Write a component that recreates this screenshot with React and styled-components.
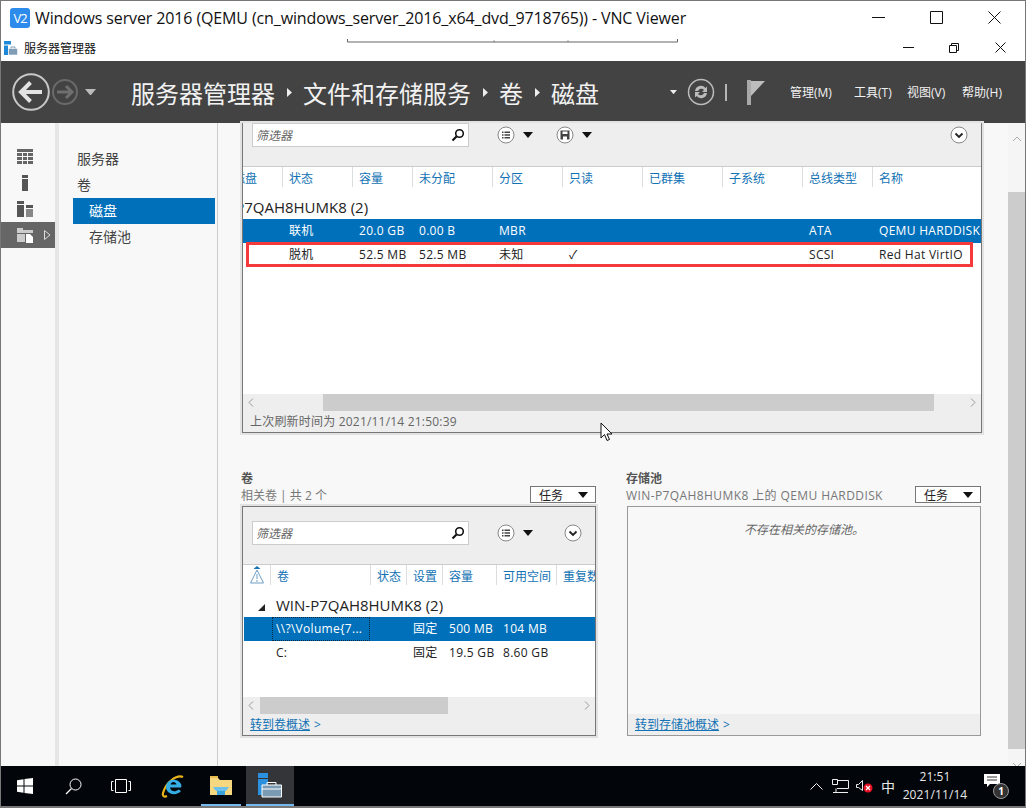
import React from 'react'
import styled, { createGlobalStyle } from 'styled-components'

const FONT = `"Open Sans", "Noto Sans CJK SC", sans-serif`
const BLUE = '#0070bb'
const LINK = '#1272b4'

const Global = createGlobalStyle`
  html, body { margin: 0; padding: 0; background: #fff; }
  body { font-family: ${FONT}; font-size: 12px; }
  * { box-sizing: border-box; }
`

const Caret = ({ size = 10, color = '#111' }) => (
  <svg width={size} height={size * 0.6} viewBox="0 0 10 6"><path d="M0 0h10L5 6z" fill={color} /></svg>
)

const RoundIcon = ({ kind }) => (
  <svg width="18" height="18" viewBox="0 0 18 18">
    <circle cx="9" cy="9" r="8" fill="#fff" stroke="#888" />
    {kind === 'list' && (
      <path d="M5 5.500h1.500v1.500H5zM5 8.300h1.500v1.500H5zM5 11h1.500v1.500H5zM7.500 5.500H13v1.500H7.500zM7.500 8.300H13v1.500H7.500zM7.500 11H13v1.500H7.500z" fill="#444" />
    )}
    {kind === 'save' && (
      <path d="M4.500 4.500h9v9h-9zM6.500 5.500v2.500h5V5.500zM7 10.500v3h4v-3z" fill="#444" fillRule="evenodd" />
    )}
    {kind === 'down' && <path d="M5.500 7.500L9 11l3.500-3.500" fill="none" stroke="#222" strokeWidth="1.800" />}
  </svg>
)

const SearchIcon = () => (
  <svg width="14" height="14" viewBox="0 0 14 14">
    <circle cx="8.500" cy="5.500" r="3.800" fill="none" stroke="#111" strokeWidth="1.600" />
    <path d="M5.500 8.500L1.500 12.500" stroke="#111" strokeWidth="2.200" />
  </svg>
)

const Window = styled.div`
  width: 1026px;
  height: 808px;
  border: 1px solid #777;
  border-bottom-width: 2px;
  display: flex;
  flex-direction: column;
  overflow: hidden;
  position: relative;
  background: #fff;
`

const TitleBar = styled.div`
  height: 33px;
  flex: none;
  display: flex;
  align-items: center;
  padding: 0 2px 0 9px;
  font-size: 16px;
  color: #111;
  white-space: nowrap;
`

const TitleText = styled.span`
  margin-left: 5px;
  letter-spacing: -0.12px;
  flex: 1;
`

const LogoBox = styled.div`
  width: 20px;
  height: 20px;
  border-radius: 3px;
  background: #2d8ceb;
  color: #fff;
  font-size: 13px;
  line-height: 20px;
  text-align: center;
  letter-spacing: -1px;
  flex: none;
`

const WinButton = styled.div`
  width: ${p => p.$w}px;
  height: 100%;
  display: flex;
  align-items: center;
  justify-content: center;
  flex: none;
`

const InnerBar = styled.div`
  height: 27px;
  flex: none;
  display: flex;
  align-items: center;
  padding: 0 2px 0 3px;
  font-size: 12px;
  color: #111;
`

const InnerTitle = styled.span`
  margin-left: 6px;
  flex: 1;
`

const ToolbarRemnant = styled.svg`
  position: absolute;
  left: 346px;
  top: 36px;
`

const Header = styled.header`
  height: 62px;
  flex: none;
  background: #434343;
  color: #f2f2f2;
  display: flex;
  align-items: center;
  padding-left: 11px;
`

const NavArrows = styled.div`
  width: 119px;
  display: flex;
  align-items: center;
  gap: 2px;
`

const NavCaret = styled.span`
  margin-left: 5px;
  display: flex;
`

const Crumbs = styled.div`
  display: flex;
  align-items: center;
  font-size: 24px;
  width: 530px;
  letter-spacing: 0;
`

const CrumbArrow = styled.span`
  width: 28px;
  display: flex;
  justify-content: center;
`

const HeaderTools = styled.div`
  display: flex;
  align-items: center;
  margin-left: 9px;
`

const RefreshIcon = styled.svg`
  margin-left: 10px;
`

const Pipe = styled.div`
  width: 2px;
  height: 17px;
  background: #b5b5b5;
  margin: 0 20px 0 10px;
`

const Menu = styled.nav`
  display: grid;
  grid-template-columns: 64px 53px 55px auto;
  margin-left: 25px;
  font-size: 12px;
  white-space: nowrap;
`

const Body = styled.div`
  flex: 1;
  min-height: 0;
  display: flex;
  background: #f8f8f8;
`

const IconRail = styled.div`
  width: 54px;
  flex: none;
  padding-top: 21px;
`

const RailStrip = styled.div`
  width: 4px;
  flex: none;
  background: #e6e6e6;
`

const RailItem = styled.div`
  height: 26px;
  display: flex;
  align-items: center;
  padding-left: 16px;
  position: relative;
  background: ${p => (p.$active ? '#666' : 'transparent')};
`

const RailMarker = styled.svg`
  position: absolute;
  left: 43px;
  top: 8px;
`

const SideNav = styled.div`
  width: 159px;
  flex: none;
  border-right: 1px solid #ccc;
  padding: 23px 2px 0 14px;
`

const NavItem = styled.div`
  height: 26px;
  line-height: 26px;
  font-size: 14px;
  color: ${p => (p.$active ? '#fff' : '#444')};
  background: ${p => (p.$active ? BLUE : 'transparent')};
  padding-left: ${p => (p.$sub ? 16 : 4)}px;
`

const Content = styled.main`
  flex: 1;
  min-width: 0;
  padding-left: 24px;
  padding-right: 26px;
  display: flex;
  flex-direction: column;
`

const Panel = styled.section`
  border: 1px solid #777;
  border-top-width: ${p => (p.$cut ? 0 : 1)}px;
  height: ${p => p.$h}px;
  flex: none;
  box-shadow: 0 0 0 2px #e2e2e2;
  display: flex;
  flex-direction: column;
  background: #fff;
  position: relative;
`

const Toolbar = styled.div`
  height: ${p => p.$h}px;
  flex: none;
  background: #eee;
  border-bottom: 1px solid #ccc;
  display: flex;
  align-items: flex-start;
  padding: ${p => p.$top}px 13px 0 9px;
`

const FilterBox = styled.div`
  width: 218px;
  height: 24px;
  background: #fff;
  border: 1px solid #ccc;
  display: flex;
  align-items: center;
  justify-content: space-between;
  padding: 0 3px 0 3px;
  font-style: italic;
  color: #666;
`

const ToolButton = styled.div`
  display: flex;
  align-items: center;
  gap: 8px;
  height: 24px;
  margin-left: ${p => p.$ml}px;
`

const Viewport = styled.div`
  flex: 1;
  min-height: 0;
  overflow: hidden;
`

const Scrolled = styled.div`
  width: 1000px;
  margin-left: ${p => -p.$offset}px;
`

const HeadRow = styled.div`
  display: grid;
  grid-template-columns: ${p => p.$cols};
  height: 25px;
  background: #fff;
  color: ${LINK};
`

const HeadCell = styled.div`
  height: 20px;
  line-height: 23px;
  padding-left: ${p => p.$pad ?? 7}px;
  margin-right: -1px;
  border-right: 1px solid #ddd;
  white-space: nowrap;
  overflow: hidden;
`

const WarnIcon = styled.svg`
  margin-top: 1px;
`

const GroupRow = styled.div`
  height: 27px;
  font-size: 15px;
  color: #222;
  padding: 3px 0 0 ${p => p.$pad}px;
  display: flex;
  align-items: center;
  white-space: nowrap;
`

const GroupArrow = styled.span`
  width: 0;
  height: 0;
  margin: 4px 11px 0 0;
  border-right: 7px solid #222;
  border-top: 7px solid transparent;
`

const Row = styled.div`
  display: grid;
  grid-template-columns: ${p => p.$cols};
  height: 24px;
  line-height: 23px;
  color: ${p => (p.$selected ? '#fff' : '#222')};
  background: ${p => (p.$selected ? BLUE : 'transparent')};
  position: relative;
  margin-left: ${p => p.$ml || 0}px;
`

const Cell = styled.div`
  padding-left: ${p => p.$pad ?? 7}px;
  white-space: nowrap;
  overflow: hidden;
  letter-spacing: 0.3px;
`

const FocusCell = styled(Cell)`
  outline: 1px dotted #0b2a45;
  outline-offset: -1px;
  margin-left: 2px;
  padding-left: 4px;
`

const RedMark = styled.div`
  position: absolute;
  left: 80px;
  top: -1px;
  width: 727px;
  height: 25px;
  border: 3px solid #f43a3a;
`

const HScroll = styled.div`
  height: 17px;
  flex: none;
  background: #eee;
  display: flex;
  align-items: center;
  color: #888;
`

const ScrollEnd = styled.div`
  width: ${p => p.$w}px;
  flex: none;
  padding-left: ${p => p.$pad}px;
  display: flex;
`

const HThumb = styled.div`
  width: ${p => p.$w}px;
  height: 17px;
  flex: none;
  background: #ccc;
`

const Footer = styled.div`
  height: 21px;
  flex: none;
  background: #eee;
  color: #666;
  padding-left: 7px;
  line-height: 21px;
  white-space: nowrap;
  letter-spacing: 0.2px;
`

const FootLink = styled.span`
  color: ${LINK};
  letter-spacing: 0;
`

const FootLabel = styled.span`
  text-decoration: underline;
  margin-right: 4px;
`

const Sections = styled.div`
  display: grid;
  grid-template-columns: 354px 354px;
  column-gap: 31px;
  margin-top: 38px;
`

const SectionHead = styled.div`
  height: 35px;
`

const SectionTitle = styled.div`
  font-weight: 700;
  color: #555;
  line-height: 15px;
  margin-left: -1px;
`

const SectionSub = styled.div`
  display: flex;
  justify-content: space-between;
  align-items: center;
  height: 17px;
  color: #777;
  white-space: nowrap;
  margin-left: -1px;
  letter-spacing: ${p => (p.$spread ? 0.4 : 0)}px;
`

const TaskButton = styled.div`
  width: 66px;
  height: 17px;
  border: 1px solid #777;
  background: #fff;
  color: #222;
  display: flex;
  align-items: center;
  justify-content: space-between;
  padding: 0 7px 0 8px;
  flex: none;
  letter-spacing: 0;
`

const EmptyPanel = styled.section`
  height: 230px;
  border: 1px solid #999;
  background: #f8f8f8;
  display: flex;
  flex-direction: column;
`

const EmptyText = styled.div`
  flex: 1;
  text-align: center;
  padding-top: 13px;
  color: #666;
  font-style: italic;
`

const VScroll = styled.div`
  width: 17px;
  flex: none;
  background: #f5f5f5;
  display: flex;
  flex-direction: column;
  align-items: center;
`

const VArrow = styled.div`
  height: 17px;
  flex: none;
  padding-top: ${p => p.$pad}px;
`

const VThumb = styled.div`
  width: 17px;
  height: 557px;
  margin-top: 52px;
  background: #ccc;
  flex: none;
`

const Taskbar = styled.footer`
  height: 40px;
  flex: none;
  background: #02060b;
  display: flex;
  align-items: center;
  color: #e8e8e8;
`

const TaskSlot = styled.div`
  width: ${p => p.$w || 48}px;
  height: 40px;
  display: flex;
  align-items: center;
  justify-content: center;
  flex: none;
  margin-left: ${p => p.$ml || 0}px;
  background: ${p => (p.$active ? '#333538' : 'transparent')};
  border-bottom: ${p => (p.$open ? '2px solid #76b9ed' : '0')};
`

const TaskSpacer = styled.div`
  flex: 1;
`

const Tray = styled.div`
  width: 24px;
  height: 40px;
  display: flex;
  align-items: center;
  justify-content: center;
  flex: none;
  font-size: 14px;
`

const Clock = styled.div`
  width: 70px;
  flex: none;
  text-align: center;
  line-height: 18px;
  font-size: 12px;
  letter-spacing: 0.1px;
  white-space: nowrap;
`

const Notify = styled.div`
  width: 24px;
  height: 28px;
  margin: 0 17px 0 14px;
  position: relative;
  flex: none;
`

const NotifyGlyph = styled.svg`
  margin-top: 2px;
`

const NotifyBadge = styled.span`
  position: absolute;
  left: 9px;
  top: 11px;
  width: 16px;
  height: 16px;
  border-radius: 50%;
  background: #333;
  border: 1px solid #999;
  color: #fff;
  font-size: 10px;
  font-weight: 700;
  line-height: 14px;
  text-align: center;
`

const Pointer = styled.svg`
  position: absolute;
  left: 598px;
  top: 421px;
`

const TOP_COLS = '116px 70px 60px 80px 70px 80px 80px 80px 70px 294px'
const LOW_COLS = '27px 100px 36px 36px 54px 60px 100px'
const LOW_ROW_COLS = '26px 100px 36px 36px 54px 60px 100px'

const topHeads = ['磁盘', '状态', '容量', '未分配', '分区', '只读', '已群集', '子系统', '总线类型', '名称']
const lowHeads = ['卷', '状态', '设置', '容量', '可用空间', '重复数']

const topRows = [
  { selected: true, cells: ['', '联机', '20.0 GB', '0.00 B', 'MBR', '', '', '', 'ATA', 'QEMU HARDDISK'] },
  { cells: ['', '脱机', '52.5 MB', '52.5 MB', '未知', '✓', '', '', 'SCSI', 'Red Hat VirtIO'] },
]

const railIcons = [
  <svg key="a" width="16" height="16" viewBox="0 0 16 16" fill="#666"><path d="M0 0h16v3H0zM0 4h5v3H0zM6 4h4v3H6zM11 4h5v3h-5zM0 8h5v3H0zM6 8h4v3H6zM11 8h5v3h-5zM0 12h5v3H0zM6 12h4v3H6zM11 12h5v3h-5z" /></svg>,
  <svg key="b" width="16" height="16" viewBox="0 0 16 16" fill="#555"><path d="M5 0h6v3H5zM5 4h6v12H5z" /></svg>,
  <svg key="c" width="16" height="16" viewBox="0 0 16 16"><path d="M0 0h7v3H0zM0 4h7v12H0z" fill="#555" /><path d="M9 4h7v3H9z" fill="#555" /><path d="M9 8h7v8H9z" fill="#888" /></svg>,
]

const CrumbMark = () => (
  <CrumbArrow>
    <svg width="5" height="9" viewBox="0 0 5 9"><path d="M0 0l5 4.500L0 9z" fill="#eee" /></svg>
  </CrumbArrow>
)

const SectionHeader = ({ title, sub, spread }) => (
  <SectionHead>
    <SectionTitle>{title}</SectionTitle>
    <SectionSub $spread={spread}>
      <span>{sub}</span>
      <TaskButton>任务<Caret /></TaskButton>
    </SectionSub>
  </SectionHead>
)

const App = () => {
  return (
    <Window>
      <Global />
      <TitleBar>
        <LogoBox>V2</LogoBox>
        <TitleText>Windows server 2016 (QEMU (cn_windows_server_2016_x64_dvd_9718765)) - VNC Viewer</TitleText>
        <WinButton $w={58}>
          <svg width="13" height="13" viewBox="0 0 13 13"><path d="M0 6.500h13" stroke="#111" /></svg>
        </WinButton>
        <WinButton $w={58}>
          <svg width="13" height="13" viewBox="0 0 13 13"><path d="M.5.500h12v12H.500z" fill="none" stroke="#111" /></svg>
        </WinButton>
        <WinButton $w={58}>
          <svg width="13" height="13" viewBox="0 0 13 13"><path d="M.5.500l12 12M12.500.500l-12 12" stroke="#111" /></svg>
        </WinButton>
      </TitleBar>
      <InnerBar>
        <svg width="14" height="14" viewBox="0 0 14 14">
          <path d="M0 0h7v3.500H0zM0 4.500h4V14H0z" fill="#1e88d8" />
          <path d="M4.500 7.500h9V14h-9z" fill="#7f9db5" stroke="#fff" strokeWidth=".6" />
          <path d="M7 7.500V6h4v1.500" fill="none" stroke="#7f9db5" />
        </svg>
        <InnerTitle>服务器管理器</InnerTitle>
        <WinButton $w={46}>
          <svg width="11" height="11" viewBox="0 0 11 11"><path d="M0 5.500h11" stroke="#111" /></svg>
        </WinButton>
        <WinButton $w={46}>
          <svg width="10" height="10" viewBox="0 0 10 10"><path d="M.5 2.500h7v7h-7zM2.500 2.500v-2h7v7h-2" fill="none" stroke="#111" /></svg>
        </WinButton>
        <WinButton $w={46}>
          <svg width="11" height="11" viewBox="0 0 11 11"><path d="M.5.500l10 10M10.500.500l-10 10" stroke="#111" /></svg>
        </WinButton>
      </InnerBar>
      <ToolbarRemnant width="332" height="6" viewBox="0 0 332 6">
        <path d="M.5 2v3H330.500V2M147 3.500v1.500M221 3.500v1.500" fill="none" stroke="#666" />
      </ToolbarRemnant>

      <Header>
        <NavArrows>
          <svg width="38" height="38" viewBox="0 0 38 38">
            <circle cx="19" cy="19" r="17.800" fill="none" stroke="#c8c8c8" strokeWidth="2" />
            <path d="M9 19h21M18.500 9.500L9 19l9.500 9.500" fill="none" stroke="#e3e3e3" strokeWidth="4" />
          </svg>
          <svg width="26" height="26" viewBox="0 0 26 26">
            <circle cx="13" cy="13" r="12" fill="none" stroke="#6a6a6a" strokeWidth="2" />
            <path d="M20 13H5M14 7l6 6-6 6" fill="none" stroke="#6f6f6f" strokeWidth="3" />
          </svg>
          <NavCaret><Caret size={11} color="#bbb" /></NavCaret>
        </NavArrows>
        <Crumbs>
          <span>服务器管理器</span>
          <CrumbMark />
          <span>文件和存储服务</span>
          <CrumbMark />
          <span>卷</span>
          <CrumbMark />
          <span>磁盘</span>
        </Crumbs>
        <HeaderTools>
          <Caret size={7} color="#eee" />
          <RefreshIcon width="28" height="28" viewBox="0 0 28 28">
            <circle cx="14" cy="14" r="12.500" fill="none" stroke="#bcbcbc" strokeWidth="1.500" />
            <path d="M8 13a6 6 0 0 1 10.500-3l1.500-1.500V14h-5l2-2a3.500 3.500 0 0 0-6 1zM20 15a6 6 0 0 1-10.500 3L8 19.500V14h5l-2 2a3.500 3.500 0 0 0 6-1z" fill="#bcbcbc" />
          </RefreshIcon>
          <Pipe />
          <svg width="18" height="25" viewBox="0 0 18 25">
            <path d="M0 0h4v25H0z" fill="#a8a8a8" />
            <path d="M4 1h14L4 16z" fill="#bdbdbd" />
          </svg>
        </HeaderTools>
        <Menu>
          <span>管理(M)</span>
          <span>工具(T)</span>
          <span>视图(V)</span>
          <span>帮助(H)</span>
        </Menu>
      </Header>

      <Body>
        <IconRail>
          {railIcons.map(icon => <RailItem key={icon.key}>{icon}</RailItem>)}
          <RailItem $active>
            <svg width="16" height="16" viewBox="0 0 16 16">
              <path d="M0 1h6v2h10v3H0zM0 7h8v8H0z" fill="#ccc" />
              <path d="M9 7h4l3 3v6H9z" fill="#fff" />
            </svg>
            <RailMarker width="7" height="10" viewBox="0 0 7 10">
              <path d="M.5.500l5.500 4.500-5.500 4.500z" fill="none" stroke="#ddd" />
            </RailMarker>
          </RailItem>
        </IconRail>
        <RailStrip />
        <SideNav>
          <NavItem>服务器</NavItem>
          <NavItem>卷</NavItem>
          <NavItem $sub $active>磁盘</NavItem>
          <NavItem $sub>存储池</NavItem>
        </SideNav>

        <Content>
          <Panel $cut $h={310}>
            <Toolbar $h={44} $top={0}>
              <FilterBox>筛选器<SearchIcon /></FilterBox>
              <ToolButton $ml={28}><RoundIcon kind="list" /><Caret /></ToolButton>
              <ToolButton $ml={23}><RoundIcon kind="save" /><Caret /></ToolButton>
              <ToolButton $ml={358}><RoundIcon kind="down" /></ToolButton>
            </Toolbar>
            <Viewport>
              <Scrolled $offset={77}>
                <HeadRow $cols={TOP_COLS}>
                  {topHeads.map((h, i) => <HeadCell key={h} $pad={i === 0 ? 67 : 7}>{h}</HeadCell>)}
                </HeadRow>
                <GroupRow $pad={35}>WIN-P7QAH8HUMK8 (2)</GroupRow>
                {topRows.map((r, i) => (
                  <Row key={i} $cols={TOP_COLS} $selected={r.selected}>
                    {r.cells.map((c, j) => <Cell key={j}>{c}</Cell>)}
                    {!r.selected && <RedMark />}
                  </Row>
                ))}
              </Scrolled>
            </Viewport>
            <HScroll>
              <ScrollEnd $w={80} $pad={5}>
                <svg width="6" height="9" viewBox="0 0 6 9"><path d="M5 .5L1 4.500 5 8.500" fill="none" stroke="#999" /></svg>
              </ScrollEnd>
              <HThumb $w={611} />
              <ScrollEnd $w={47} $pad={36}>
                <svg width="6" height="9" viewBox="0 0 6 9"><path d="M1 .5L5 4.500 1 8.500" fill="none" stroke="#999" /></svg>
              </ScrollEnd>
            </HScroll>
            <Footer>上次刷新时间为 2021/11/14 21:50:39</Footer>
          </Panel>

          <Sections>
            <div>
              <SectionHeader title="卷" sub="相关卷 | 共 2 个" />
              <Panel $h={230}>
                <Toolbar $h={58} $top={14}>
                  <FilterBox>筛选器<SearchIcon /></FilterBox>
                  <ToolButton $ml={28}><RoundIcon kind="list" /><Caret /></ToolButton>
                  <ToolButton $ml={31}><RoundIcon kind="down" /></ToolButton>
                </Toolbar>
                <Viewport>
                  <Scrolled $offset={0}>
                    <HeadRow $cols={LOW_COLS}>
                      <HeadCell $pad={7}>
                        <WarnIcon width="14" height="19" viewBox="0 0 14 19">
                          <path d="M7 0l3.500 3h-7z" fill="#1272b4" />
                          <path d="M7 4l6.500 13H.500z" fill="none" stroke="#6d9fc7" />
                          <path d="M7 8v5M7 14v2" stroke="#6d9fc7" />
                        </WarnIcon>
                      </HeadCell>
                      {lowHeads.map(h => <HeadCell key={h}>{h}</HeadCell>)}
                    </HeadRow>
                    <GroupRow $pad={15}><GroupArrow />WIN-P7QAH8HUMK8 (2)</GroupRow>
                    <Row $cols={LOW_ROW_COLS} $selected $ml={1}>
                      <span />
                      <FocusCell>{'\\\\?\\Volume{7...'}</FocusCell>
                      <Cell />
                      <Cell>固定</Cell>
                      <Cell>500 MB</Cell>
                      <Cell>104 MB</Cell>
                      <Cell />
                    </Row>
                    <Row $cols={LOW_ROW_COLS} $ml={1}>
                      <span />
                      <Cell $pad={6}>C:</Cell>
                      <Cell />
                      <Cell>固定</Cell>
                      <Cell>19.5 GB</Cell>
                      <Cell>8.60 GB</Cell>
                      <Cell />
                    </Row>
                  </Scrolled>
                </Viewport>
                <HScroll>
                  <ScrollEnd $w={17} $pad={5}>
                    <svg width="6" height="9" viewBox="0 0 6 9"><path d="M5 .5L1 4.500 5 8.500" fill="none" stroke="#999" /></svg>
                  </ScrollEnd>
                  <HThumb $w={188} />
                  <ScrollEnd $w={147} $pad={136}>
                    <svg width="6" height="9" viewBox="0 0 6 9"><path d="M1 .5L5 4.500 1 8.500" fill="none" stroke="#999" /></svg>
                  </ScrollEnd>
                </HScroll>
                <Footer><FootLink><FootLabel>转到卷概述</FootLabel>&gt;</FootLink></Footer>
              </Panel>
            </div>
            <div>
              <SectionHeader title="存储池" sub="WIN-P7QAH8HUMK8 上的 QEMU HARDDISK" spread />
              <EmptyPanel>
                <EmptyText>不存在相关的存储池。</EmptyText>
                <Footer><FootLink><FootLabel>转到存储池概述</FootLabel>&gt;</FootLink></Footer>
              </EmptyPanel>
            </div>
          </Sections>
        </Content>

        <VScroll>
          <VArrow $pad={6}>
            <svg width="10" height="6" viewBox="0 0 10 6"><path d="M1 5l4-4 4 4" fill="none" stroke="#aaa" /></svg>
          </VArrow>
          <VThumb />
          <VArrow $pad={6}>
            <svg width="10" height="6" viewBox="0 0 10 6"><path d="M1 1l4 4 4-4" fill="none" stroke="#aaa" /></svg>
          </VArrow>
        </VScroll>
      </Body>

      <Taskbar>
        <TaskSlot>
          <svg width="16" height="16" viewBox="0 0 16 16" fill="#fff"><path d="M0 2.200L6.500 1.300V7.500H0zM7.500 1.100L16 0V7.500H7.500zM0 8.500H6.500V14.700L0 13.800zM7.500 8.500H16V16L7.500 14.900z" /></svg>
        </TaskSlot>
        <TaskSlot>
          <svg width="17" height="17" viewBox="0 0 17 17"><circle cx="10.500" cy="6.500" r="5.500" fill="none" stroke="#fff" /><path d="M6.500 10.500L1 16" stroke="#fff" strokeWidth="1.300" /></svg>
        </TaskSlot>
        <TaskSlot>
          <svg width="20" height="14" viewBox="0 0 20 14" fill="none" stroke="#fff"><path d="M4.500.500h11v13h-11zM2.500 2.500H.5v9h2M17.500 2.500h2v9h-2" /></svg>
        </TaskSlot>
        <TaskSlot $w={49} $ml={3}>
          <svg width="24" height="24" viewBox="0 0 24 24">
            <path d="M22 3C16 0 5 8 2 19c-.7 3 1 4.500 4 3" fill="none" stroke="#e8b31a" strokeWidth="2.200" />
            <path d="M20 13.500H9c.2 4 5.500 5 8.500 2l2.500 1.500c-4.500 5.500-15 3.500-15-4 0-8 11.500-10 15-3 .5 1 .5 2.500 0 3.500zM9.500 10.500h6c-.8-3.500-5.300-3.300-6 0z" fill="#35aee6" fillRule="evenodd" />
          </svg>
        </TaskSlot>
        <TaskSlot $w={40} $ml={4} $open>
          <svg width="22" height="19" viewBox="0 0 22 19">
            <path d="M0 2h8l2 2h12v15H0z" fill="#f5d77f" />
            <path d="M0 0h8v2H0z" fill="#e9bd4f" />
            <path d="M7 11h8v8H7z" fill="#3aa0de" />
            <path d="M3 11h16l-3 4H6z" fill="#6cc0ec" />
          </svg>
        </TaskSlot>
        <TaskSlot $ml={5} $active $open>
          <svg width="24" height="25" viewBox="0 0 24 25">
            <path d="M0 0h10v5H0zM0 6h10v16H0z" fill="#2b90dd" />
            <path d="M4 12h19.500v12H4z" fill="#7b9ab3" stroke="#fff" />
            <path d="M9 12V9.500h9V12M4 16h19.500" fill="none" stroke="#fff" />
          </svg>
        </TaskSlot>
        <TaskSpacer />
        <Tray>
          <svg width="13" height="7" viewBox="0 0 13 7"><path d="M.5 6.500l6-6 6 6" fill="none" stroke="#eee" /></svg>
        </Tray>
        <Tray>
          <svg width="17" height="14" viewBox="0 0 17 14" fill="none" stroke="#eee"><path d="M5 1.500h11.500v8H5M4 9.500v4M1 13.500h15M.5.500h5v5h-5z" /></svg>
        </Tray>
        <Tray>
          <svg width="17" height="13" viewBox="0 0 17 13"><path d="M.5 4.500h2L6.500.5v10l-4-3h-2z" fill="none" stroke="#eee" /><circle cx="12" cy="8" r="4.500" fill="#e81123" /><path d="M10 6l4 4M14 6l-4 4" stroke="#fff" strokeWidth="1.200" /></svg>
        </Tray>
        <Tray>中</Tray>
        <Clock>21:51<br />2021/11/14</Clock>
        <Notify>
          <NotifyGlyph width="16" height="13" viewBox="0 0 16 13">
            <path d="M0 0h16v10H6l-3 3v-3H0z" fill="#fff" />
            <path d="M3 3h10M3 6h10" stroke="#333" />
          </NotifyGlyph>
          <NotifyBadge>1</NotifyBadge>
        </Notify>
      </Taskbar>

      <Pointer width="16" height="22" viewBox="0 0 16 22">
        <path d="M2 1v15l3.500-3.500L8 18.500l2.500-1-2.500-5.500h5z" fill="#fff" stroke="#111" />
      </Pointer>
    </Window>
  )
}

export default App
